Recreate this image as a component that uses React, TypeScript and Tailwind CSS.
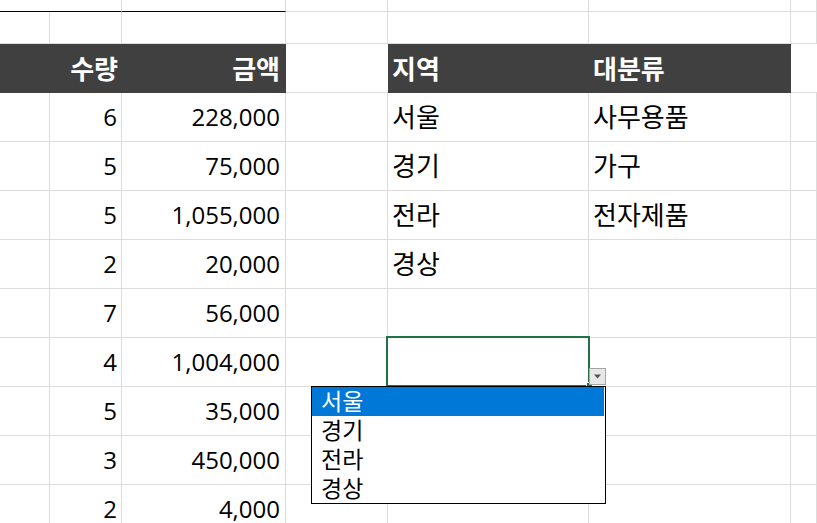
import React from "react";

interface SheetRow {
    qty: string,
    amount: string,
    region?: string,
    category?: string,
}

const rows: SheetRow[] = [
    { qty: "6", amount: "228,000", region: "서울", category: "사무용품" },
    { qty: "5", amount: "75,000", region: "경기", category: "가구" },
    { qty: "5", amount: "1,055,000", region: "전라", category: "전자제품" },
    { qty: "2", amount: "20,000", region: "경상" },
    { qty: "7", amount: "56,000" },
    { qty: "4", amount: "1,004,000" },
    { qty: "5", amount: "35,000" },
    { qty: "3", amount: "450,000" },
    { qty: "2", amount: "4,000" },
];

const regions = ["서울", "경기", "전라", "경상"];

// 열 너비 (A ~ G)
const colA = "w-[50px] shrink-0";
const colB = "w-[72px] shrink-0";
const colC = "w-[164px] shrink-0";
const colD = "w-[102px] shrink-0";
const colE = "w-[201px] shrink-0";
const colF = "w-[202px] shrink-0";
const colG = "flex-1";

const grid = "h-full border-r border-b border-[#dcdcdc] flex items-center";
const dark = "h-full bg-[#404040] flex items-center text-white font-bold text-[26px]";

function RegionDropdown() {
    return (
        <>
            {/* 선택된 셀 테두리 */}
            <div className="absolute -left-[2px] -top-[2px] w-[204px] h-[51px] border-2 border-[#217346] pointer-events-none" />
            <div className="absolute left-[198px] top-[44px] w-[7px] h-[7px] bg-[#217346] border border-white" />
            {/* 드롭다운 버튼 */}
            <div className="absolute left-[201px] top-[30px] w-[17px] h-[17px] bg-[#e8e8e8] border border-[#a6a6a6] flex items-center justify-center">
                <svg width="9" height="5" viewBox="0 0 9 5">
                    <path d="M1 0.5 L8 0.5 L4.5 4.5 Z" fill="#555555" />
                </svg>
            </div>
            {/* 목록 */}
            <div className="absolute -left-[77px] top-[48px] w-[295px] h-[118px] z-10 bg-white border border-black text-[23px] leading-none">
                {regions.map((name, i) => (
                    <div
                        key={name}
                        className={`h-[29px] mr-[1px] pl-[9px] flex items-center ${i === 0 ? "bg-[#0078d7] text-white" : "text-black"}`}
                    >
                        {name}
                    </div>
                ))}
            </div>
        </>
    );
}

export default function App() {
    return (
        <div className="w-[817px] h-[523px] overflow-hidden bg-white text-black text-[24px] leading-none font-['Open_Sans','Noto_Sans_CJK_KR',sans-serif]">
            {/* 1행 (잘린 부분) */}
            <div className="flex h-[12px]">
                <div className={`${colA} h-full border-b border-black`} />
                <div className={`${colB} h-full border-r border-b border-r-[#dcdcdc] border-b-black`} />
                <div className={`${colC} h-full border-r border-b border-r-[#dcdcdc] border-b-black`} />
                <div className={`${colD} ${grid}`} />
                <div className={`${colE} ${grid}`} />
                <div className={`${colF} ${grid}`} />
                <div className={`${colG} ${grid}`} />
            </div>
            <div className="flex h-[32px]">
                <div className={`${colA} ${grid}`} />
                <div className={`${colB} ${grid}`} />
                <div className={`${colC} ${grid}`} />
                <div className={`${colD} ${grid}`} />
                <div className={`${colE} ${grid}`} />
                <div className={`${colF} ${grid}`} />
                <div className={`${colG} ${grid}`} />
            </div>

            {/* 머리글 */}
            <div className="flex h-[49px]">
                <div className={`${colA} ${dark}`} />
                <div className={`${colB} ${dark} justify-end pr-[4px]`}>수량</div>
                <div className={`${colC} ${dark} justify-end pr-[6px]`}>금액</div>
                <div className={`${colD} h-full border-b border-[#dcdcdc]`} />
                <div className={`${colE} ${dark} pl-[4px]`}>지역</div>
                <div className={`${colF} ${dark} pl-[4px]`}>대분류</div>
                <div className={`${colG} h-full border-b border-[#dcdcdc]`} />
            </div>

            {rows.map((row, i) => (
                <div key={i} className="flex h-[49px]">
                    <div className={`${colA} ${grid}`} />
                    <div className={`${colB} ${grid} justify-end pr-[4px]`}>{row.qty}</div>
                    <div className={`${colC} ${grid} justify-end pr-[5px]`}>{row.amount}</div>
                    <div className={`${colD} ${grid}`} />
                    <div className={`${colE} ${grid} pl-[4px] relative text-[26px]`}>
                        {row.region}
                        {i === 5 && <RegionDropdown />}
                    </div>
                    <div className={`${colF} ${grid} pl-[4px] text-[26px]`}>{row.category}</div>
                    <div className={`${colG} ${grid}`} />
                </div>
            ))}
        </div>
    );
}
